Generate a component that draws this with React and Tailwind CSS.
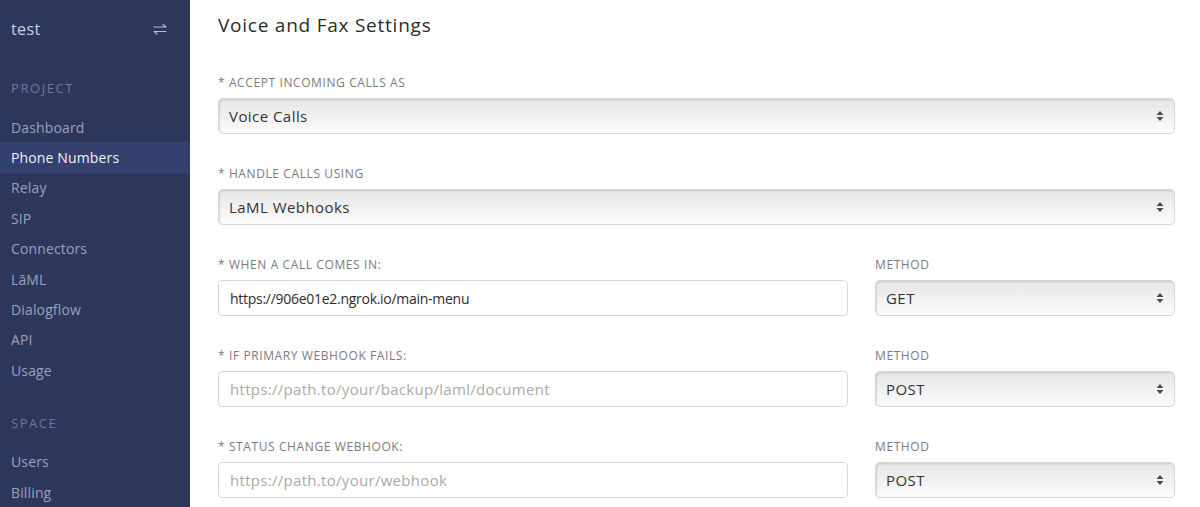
import React from 'react';

const font = { fontFamily: '"Open Sans", "Liberation Sans", sans-serif' };

const projectItems = ['Dashboard', 'Phone Numbers', 'Relay', 'SIP', 'Connectors', 'LāML', 'Dialogflow', 'API', 'Usage'];
const spaceItems = ['Users', 'Billing'];

const SwapIcon = () => (
    <svg width="16" height="12" viewBox="0 0 16 12" fill="none" stroke="#b7bdd3" strokeWidth="1.2" strokeLinecap="round">
        <path d="M2 4h12M11 1.5L14 4" />
        <path d="M14 8.5H2M5 11L2 8.5" />
    </svg>
);

const Arrows = () => (
    <svg width="8" height="12" viewBox="0 0 8 12" className="absolute right-[10px] top-1/2 -translate-y-1/2">
        <path d="M4 1L7.5 5H0.5Z" fill="#4a4a4a" />
        <path d="M4 11L7.5 7H0.5Z" fill="#4a4a4a" />
    </svg>
);

const SelectBox = ({ value }) => (
    <div className="relative h-[36px] rounded-[5px] border border-[#d6d6d6] bg-gradient-to-b from-[#e6e6e6] to-[#fcfcfc] shadow-[inset_1px_1px_2px_rgba(0,0,0,0.12)] flex items-center pl-[10px] text-[15px] tracking-[0.03em] text-[#333]">
        {value}
        <Arrows />
    </div>
);

const TextBox = ({ value, placeholder }) => (
    <div className="h-[36px] rounded-[4px] border border-[#d4d9e0] bg-white flex items-center pl-[11px]">
        {value ? (
            <span className="text-[14px] tracking-[-0.02em] text-[#2d2d2d]">{value}</span>
        ) : (
            <span className="text-[15px] tracking-[0.02em] text-[#aaaaaa]">{placeholder}</span>
        )}
    </div>
);

const Label = ({ children }) => (
    <div className="h-[16px] leading-[16px] text-[12px] tracking-[0.05em] uppercase text-[#7b7b7b] mb-[7px]">{children}</div>
);

const App = () => {
    return (
        <div className="flex h-[507px] w-[1200px] overflow-hidden bg-white" style={font}>
            <aside className="w-[190px] shrink-0 bg-[#2d365b]">
                <div className="h-[57px] flex items-center justify-between pl-[11px] pr-[22px]">
                    <span className="text-[16px] tracking-wide text-[#c8cde0]">test</span>
                    <SwapIcon />
                </div>
                <div className="mt-[17px] h-[30px] flex items-center px-[11px] text-[13px] tracking-[0.12em] text-[#6e779c]">PROJECT</div>
                <nav className="mt-[8px]">
                    {projectItems.map((item) => (
                        <div
                            key={item}
                            className={`h-[30.4px] flex items-center px-[11px] text-[14px] tracking-[0.01em] ${item === 'Phone Numbers' ? 'bg-[#34406d] text-[#eef0f6]' : 'text-[#9aa1bd]'}`}
                        >
                            {item}
                        </div>
                    ))}
                </nav>
                <div className="mt-[23px] h-[30px] flex items-center px-[11px] text-[13px] tracking-[0.12em] text-[#6e779c]">SPACE</div>
                <nav className="mt-[8px]">
                    {spaceItems.map((item) => (
                        <div key={item} className="h-[30.4px] flex items-center px-[11px] text-[14px] tracking-[0.01em] text-[#9aa1bd]">
                            {item}
                        </div>
                    ))}
                </nav>
            </aside>

            <main className="flex-1 pl-[28px] pr-[25px] pt-[13px]">
                <h1 className="h-[24px] leading-[24px] text-[19px] tracking-[0.04em] text-[#2b2b2b]">Voice and Fax Settings</h1>

                <div className="mt-[38px]">
                    <Label>* Accept incoming calls as</Label>
                    <SelectBox value="Voice Calls" />
                </div>

                <div className="mt-[32px]">
                    <Label>* Handle calls using</Label>
                    <SelectBox value="LaML Webhooks" />
                </div>

                <div className="mt-[32px] grid grid-cols-[1fr_300px] gap-x-[27px]">
                    <div>
                        <Label>* When a call comes in:</Label>
                        <TextBox value="https://906e01e2.ngrok.io/main-menu" />
                    </div>
                    <div>
                        <Label>Method</Label>
                        <SelectBox value="GET" />
                    </div>
                </div>

                <div className="mt-[32px] grid grid-cols-[1fr_300px] gap-x-[27px]">
                    <div>
                        <Label>* If primary webhook fails:</Label>
                        <TextBox placeholder="https://path.to/your/backup/laml/document" />
                    </div>
                    <div>
                        <Label>Method</Label>
                        <SelectBox value="POST" />
                    </div>
                </div>

                <div className="mt-[32px] grid grid-cols-[1fr_300px] gap-x-[27px]">
                    <div>
                        <Label>* Status change webhook:</Label>
                        <TextBox placeholder="https://path.to/your/webhook" />
                    </div>
                    <div>
                        <Label>Method</Label>
                        <SelectBox value="POST" />
                    </div>
                </div>
            </main>
        </div>
    );
};

export default App;
